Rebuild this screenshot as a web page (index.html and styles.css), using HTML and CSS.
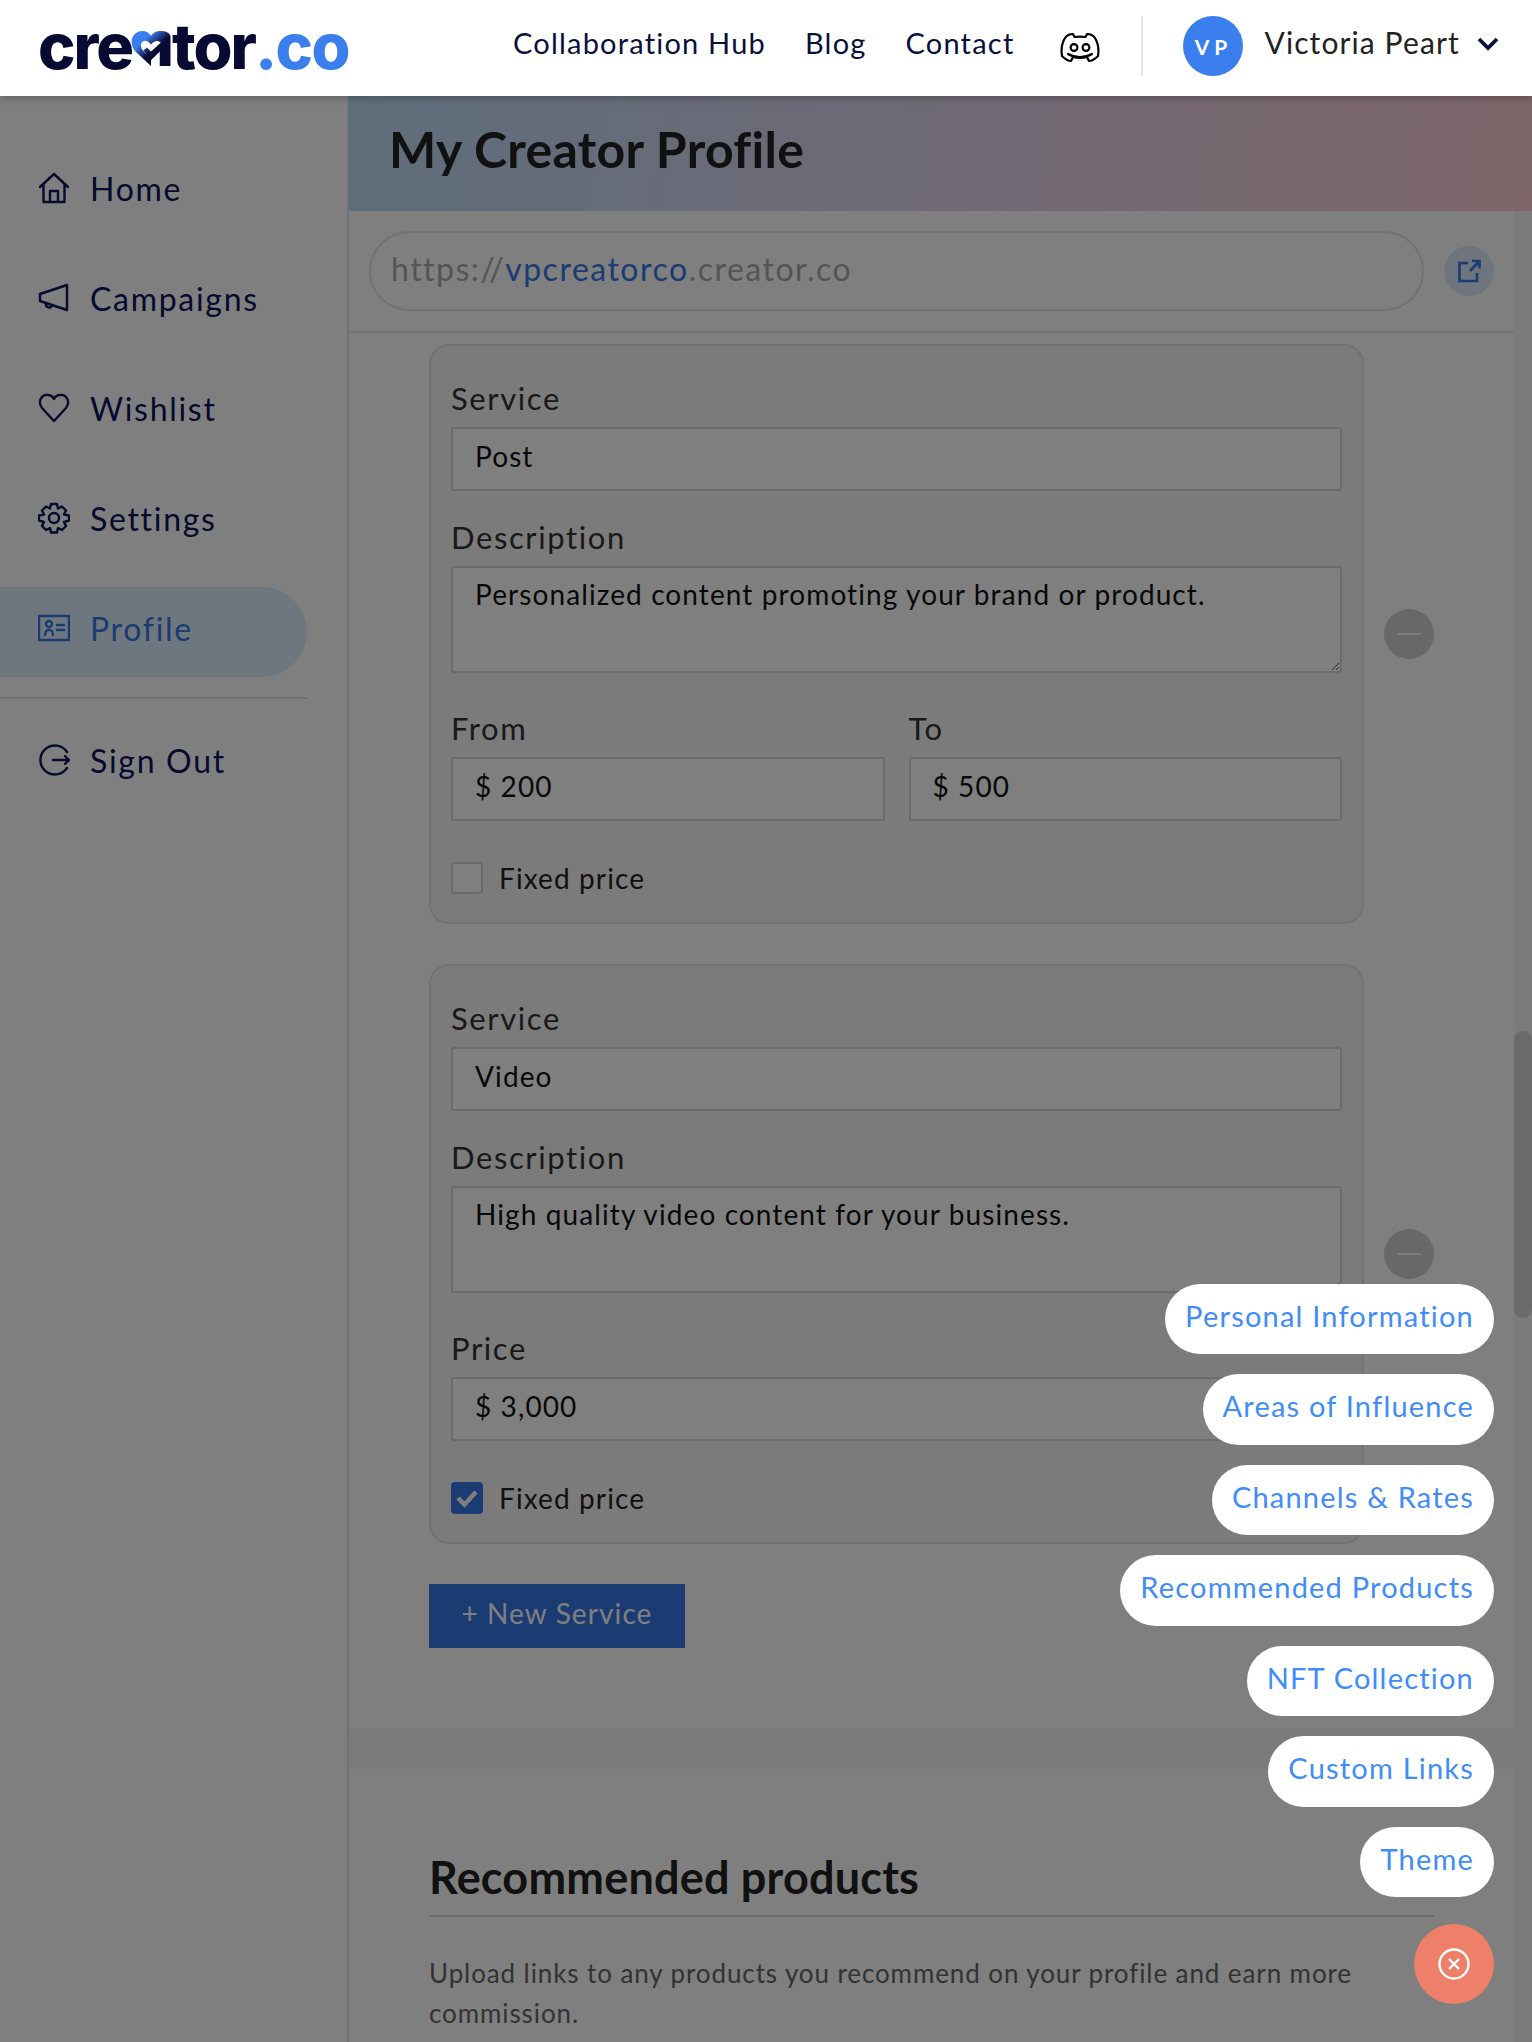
FILE: index.html
```html
<!DOCTYPE html>
<html lang="en">
<head>
<meta charset="utf-8">
<title>My Creator Profile</title>
<link rel="stylesheet" href="styles.css">
</head>
<body>
<header class="topbar">
  <a class="logo"><span class="logo-dark">cre</span><svg class="logo-heart" viewBox="0 0 42 38"><defs><linearGradient id="hg" x1="0.1" y1="0.3" x2="0.7" y2="0.9"><stop offset="0.15" stop-color="#3a7fed"/><stop offset="0.6" stop-color="#070a33"/></linearGradient></defs><path d="M21 37 L5 22 C-3 13 2 1 12 1 C16 1 19 3 21 6 C24 2 27 1 31 1 C36 1 40 3 41 6 L41 37 L30 37 L30 22 L21 31 L13 21 L17 18 L21 22 L31 13 C28 10 24 11 21 15 C18 11 13 9 11 14 C9 19 15 24 21 30 Z" fill="url(#hg)"/></svg><span class="logo-dark">tor</span><span class="logo-blue">.co</span></a>
  <nav class="topnav">
    <a>Collaboration Hub</a>
    <a>Blog</a>
    <a>Contact</a>
    <svg class="discord" viewBox="0 0 40 32" fill="none" stroke="#000" stroke-width="2.200" stroke-linejoin="round" stroke-linecap="round"><path d="M13 3 C9 3 7 4 5 7 C2 12 1 19 2 25 C5 28 8 30 11 30 L13 26 C17 27 23 27 27 26 L29 30 C32 30 35 28 38 25 C39 19 38 12 35 7 C33 4 31 3 27 3 L25.500 6 C22 5.400 18 5.400 14.500 6 Z"/><circle cx="14" cy="16.500" r="3.400"/><circle cx="26" cy="16.500" r="3.400"/><path d="M8 23 C15 27 25 27 32 23"/></svg>
  </nav>
  <div class="user">
    <span class="avatar">VP</span>
    <span class="user-name">Victoria Peart</span>
    <svg class="chevron" viewBox="0 0 22 14" fill="none" stroke="#0a0f3c" stroke-width="3.800"><path d="M2 2 L11 11 L20 2"/></svg>
  </div>
</header>

<div class="shell">
  <aside class="sidebar">
    <a class="side-item"><svg class="side-icon" viewBox="0 0 32 32"><path d="M2 15 L16 2 L30 15 M5.500 12 V30 H26.500 V12 M12 30 V19 H20 V30"/></svg>Home</a>
    <a class="side-item"><svg class="side-icon" viewBox="0 0 32 32"><path d="M2 12 L29 3 V28 L2 19 Z M8 21 C7 26 13 27 14 23"/></svg>Campaigns</a>
    <a class="side-item"><svg class="side-icon" viewBox="0 0 32 32"><path d="M16 29 L4 16 C-1 9 4 2 10 3 C13 3 15 5 16 7 C17 5 19 3 22 3 C28 2 33 9 28 16 Z"/></svg>Wishlist</a>
    <a class="side-item"><svg class="side-icon" viewBox="0 0 32 32"><circle cx="16" cy="16" r="5"/><path d="M13 2 H19 L20 6.500 L24 4.500 L28 8.500 L26 12.500 L31 13.500 V18.500 L26 20 L28 24 L24 28 L20 26 L19 30.500 H13 L12 26 L8 28 L4 24 L6 20 L1 18.500 V13.500 L6 12.500 L4 8.500 L8 4.500 L12 6.500 Z"/></svg>Settings</a>
    <a class="side-item is-active"><svg class="side-icon" viewBox="0 0 32 26"><path d="M1 1 H31 V25 H1 Z M7 20 C7 13 15 13 15 20 M8 9 A3 3 0 1 0 14 9 A3 3 0 1 0 8 9 M19 10 H26 M19 15 H26"/></svg>Profile</a>
    <hr class="side-rule">
    <a class="side-item"><svg class="side-icon" viewBox="0 0 32 32"><path d="M29 8 A14.500 14.500 0 1 0 29 24 M15 16 H31 M27 12 L31 16 L27 20"/></svg>Sign Out</a>
  </aside>

  <main class="main">
    <div class="title-band"><h1>My Creator Profile</h1></div>
    <div class="main-body">
      <div class="main-col">
        <div class="url-row">
          <div class="url-field"><span class="url-soft">https://</span><span class="url-blue">vpcreatorco</span><span class="url-soft">.creator.co</span></div>
          <span class="url-open"><svg viewBox="0 0 24 24" fill="none" stroke="#3678e6" stroke-width="2.600"><path d="M11 4 H2.500 V22 H20 V14 M13 12 L22 2.500 M15 2 H22.500 V9.500"/></svg></span>
        </div>
        <div class="content">
          <section class="services">
            <div class="service-row">
              <div class="card">
                <div class="field"><div class="label">Service</div><div class="input">Post</div></div>
                <div class="field"><div class="label">Description</div><div class="textarea">Personalized content promoting your brand or product.</div></div>
                <div class="pair">
                  <div><div class="label">From</div><div class="input">$ 200</div></div>
                  <div><div class="label">To</div><div class="input">$ 500</div></div>
                </div>
                <div class="check-row"><span class="check"></span>Fixed price</div>
              </div>
              <span class="minus"></span>
            </div>
            <div class="service-row">
              <div class="card">
                <div class="field"><div class="label">Service</div><div class="input">Video</div></div>
                <div class="field"><div class="label">Description</div><div class="textarea">High quality video content for your business.</div></div>
                <div class="pair single">
                  <div><div class="label">Price</div><div class="input">$ 3,000</div></div>
                </div>
                <div class="check-row"><span class="check is-on"><svg viewBox="0 0 32 32" fill="none" stroke="#fff" stroke-width="4.500"><path d="M7 16 L13.500 22.500 L25 10"/></svg></span>Fixed price</div>
              </div>
              <span class="minus"></span>
            </div>
            <button class="new-service">+ New Service</button>
          </section>
          <div class="band"></div>
          <section class="recommended">
            <h2>Recommended products</h2>
            <p>Upload links to any products you recommend on your profile and earn more commission.</p>
          </section>
        </div>
      </div>
      <div class="scroll-track"><div class="scroll-thumb"></div></div>
    </div>
  </main>
</div>

<div class="overlay"></div>

<div class="fab-menu">
  <a class="fab-link">Personal Information</a>
  <a class="fab-link">Areas of Influence</a>
  <a class="fab-link">Channels &amp; Rates</a>
  <a class="fab-link">Recommended Products</a>
  <a class="fab-link">NFT Collection</a>
  <a class="fab-link">Custom Links</a>
  <a class="fab-link">Theme</a>
  <span class="fab-close"><svg viewBox="0 0 32 32" fill="none" stroke="#fff" stroke-width="2.400"><circle cx="16" cy="16" r="14.500"/><path d="M11 11 L21 21 M21 11 L11 21"/></svg></span>
</div>
</body>
</html>
```

FILE: styles.css
```css
* { box-sizing: border-box; }
html, body { margin: 0; height: 2042px; overflow: hidden; }
body {
  position: relative;
  background: #fff;
  color: #151515;
  font-family: "Lato", "Liberation Sans", sans-serif;
  font-size: 29px;
  letter-spacing: 1.2px;
}

/* top bar */
.topbar {
  position: relative;
  z-index: 20;
  height: 96px;
  display: flex;
  align-items: center;
  padding: 0 0 4px 38px;
  background: #fff;
  box-shadow: 0 2px 8px rgba(0,0,0,.25);
}
.logo {
  display: flex;
  align-items: baseline;
  width: 475px;
  font-family: "Inter", sans-serif;
  font-weight: 800;
  font-size: 63px;
  letter-spacing: -2px;
  line-height: 1;
}
.logo-dark { color: #070a33; }
.logo-blue { color: #3a7fed; margin-left: 0; letter-spacing: -1.600px; }
.logo-heart { width: 42px; height: 37px; margin: 0 0 11px -2px; align-self: flex-end; }
.topnav {
  display: flex;
  align-items: center;
  gap: 39px;
  color: #0a0f3c;
  margin-top: -8px;
}
.discord { width: 40px; height: 32px; margin: 10px 0 0 7px; }
.user {
  display: flex;
  align-items: center;
  margin-left: 41px;
  border-left: 2px solid #e6e6e6;
  height: 60px;
  padding-left: 40px;
}
.avatar {
  width: 60px;
  height: 60px;
  border-radius: 50%;
  background: #3a7fed;
  color: #fff;
  font-size: 21px;
  font-weight: 700;
  letter-spacing: 5px;
  display: flex;
  align-items: center;
  justify-content: center;
}
.user-name { margin-left: 21px; color: #222; position: relative; top: -4px; font-size: 30px; letter-spacing: 1.100px; }
.chevron { width: 22px; height: 14px; margin-left: 17px; position: relative; top: -2px; }

/* shell */
.shell { display: flex; height: 1946px; }
.sidebar {
  width: 349px;
  flex: none;
  border-right: 2px solid #e4e4e4;
  padding: 51px 40px 0 0;
}
.side-item {
  display: flex;
  align-items: center;
  gap: 20px;
  height: 90px;
  padding: 0 0 8px 38px;
  margin-bottom: 20px;
  border-radius: 0 45px 45px 0;
  color: #0c145c;
  font-size: 32px;
  letter-spacing: 1.700px;
}
.side-icon {
  width: 32px;
  height: 32px;
  flex: none;
  fill: none;
  stroke: #0c145c;
  stroke-width: 2.400;
  stroke-linejoin: round;
  stroke-linecap: round;
}
.is-active { background: #dfeffc; color: #3678e6; }
.is-active .side-icon { stroke: #3678e6; stroke-linejoin: miter; }
.side-rule { border: 0; border-top: 2px solid #e4e4e4; margin: 0 0 20px; }

/* main */
.main { flex: 1; min-width: 0; display: flex; flex-direction: column; }
.title-band {
  height: 115px;
  display: flex;
  align-items: center;
  padding: 0 0 10px 40px;
  background: linear-gradient(100deg, #bddbf7 0%, #d8d6ee 40%, #fcccd3 100%);
}
.title-band h1 { margin: 0; font-size: 50px; font-weight: 700; letter-spacing: .3px; color: #222; }
.main-body { flex: 1; display: flex; min-height: 0; }
.main-col { flex: 1; min-width: 0; }
.scroll-track { width: 18px; flex: none; background: #f6f6f6; padding-top: 820px; }
.scroll-thumb { height: 287px; border-radius: 9px; background: #d4d4d4; }

.url-row {
  height: 122px;
  display: flex;
  align-items: center;
  gap: 20px;
  padding-left: 20px;
  border-bottom: 2px solid #e8e8e8;
}
.url-field {
  width: 1055px;
  height: 80px;
  border: 2px solid #e4e4e4;
  border-radius: 40px;
  display: flex;
  align-items: center;
  padding: 0 0 5px 20px;
  font-size: 32px;
  letter-spacing: 1.500px;
}
.url-soft { color: #aaa; }
.url-blue { color: #3678e6; }
.url-open {
  width: 50px;
  height: 50px;
  border-radius: 50%;
  background: #dcebf8;
  display: flex;
  align-items: center;
  justify-content: center;
}
.url-open svg { width: 24px; height: 24px; }

.content { height: 1709px; overflow: hidden; }
.services { padding: 11px 0 81px 80px; display: flex; flex-direction: column; gap: 40px; align-items: flex-start; }
.service-row { display: flex; align-items: center; gap: 20px; }
.card {
  width: 935px;
  padding: 26px 20px 28px;
  background: #f7f7f7;
  border: 2px solid #e4e4e4;
  border-radius: 20px;
  display: flex;
  flex-direction: column;
  gap: 20px;
}
.label { height: 55px; line-height: 53px; font-size: 31px; letter-spacing: 1.600px; color: #333; }
.input, .textarea {
  background: #fff;
  border: 2px solid #d8d8d8;
  border-radius: 3px;
  padding: 0 22px;
  color: #111;
  font-size: 28px;
  letter-spacing: 1.100px;
}
.input { height: 64px; line-height: 54px; }
.textarea { height: 107px; line-height: 52px; margin-bottom: 9px; overflow: auto; resize: vertical; }
.pair { display: grid; grid-template-columns: 1fr 1fr; gap: 24px; }
.pair.single { grid-template-columns: 1fr; }
.check-row { display: flex; align-items: center; gap: 16px; margin-top: 21px; height: 32px; font-size: 28px; letter-spacing: 1.100px; color: #222; }
.check { width: 32px; height: 32px; background: #fff; border: 2px solid #d4d4d4; border-radius: 4px; }
.check.is-on { background: #3678e6; border-color: #3678e6; }
.check svg { display: block; margin: -2px; width: 32px; height: 32px; }
.minus {
  width: 50px;
  height: 50px;
  border-radius: 50%;
  background: #d0d0d0;
  display: flex;
  align-items: center;
  justify-content: center;
}
.minus::before { content: ""; width: 23px; height: 2px; background: #fff; opacity: .9; }
.new-service {
  width: 256px;
  height: 64px;
  border: 0;
  background: #3678e6;
  color: #fff;
  font-family: inherit;
  font-size: 28px;
  letter-spacing: 1.100px;
  padding: 0 0 7px;
}
.band { height: 40px; background: #f6f6f6; }
.recommended { padding: 80px 0 0 80px; width: 1085px; }
.recommended h2 {
  margin: 0;
  height: 68px;
  line-height: 56px;
  border-bottom: 2px solid #d8d8d8;
  font-size: 45px;
  font-weight: 700;
  letter-spacing: .2px;
  color: #222;
}
.recommended p { margin: 36px 0 0; font-size: 26px; letter-spacing: .9px; line-height: 40px; color: #666; width: 1004px; }

/* overlay + floating menu */
.overlay { position: absolute; inset: 0; z-index: 10; background: rgba(0,0,0,.5); }
.fab-menu {
  position: absolute;
  z-index: 30;
  right: 38px;
  bottom: 38px;
  display: flex;
  flex-direction: column;
  align-items: flex-end;
  gap: 20px;
}
.fab-link {
  height: 70.500px;
  padding: 0 20px;
  border-radius: 36px;
  background: #fff;
  color: #3f8cfa;
  font-size: 29px;
  letter-spacing: 1.200px;
  line-height: 63px;
}
.fab-close {
  width: 80px;
  height: 80px;
  margin-top: 7px;
  border-radius: 50%;
  background: #ee7f68;
  display: flex;
  align-items: center;
  justify-content: center;
}
.fab-close svg { width: 32px; height: 32px; }
```
